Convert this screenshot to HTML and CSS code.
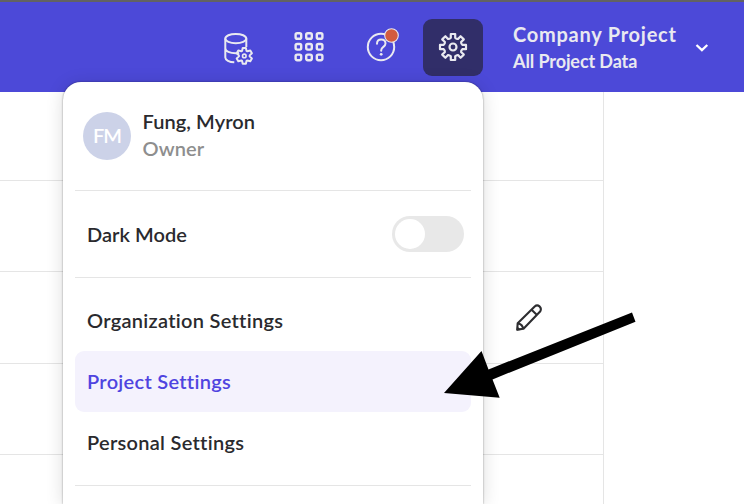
FILE: index.html
```html
<!DOCTYPE html>
<html lang="en">
<head>
<meta charset="utf-8">
<title>Project Settings</title>
<link rel="stylesheet" href="styles.css">
</head>
<body>
<header class="topbar">
  <nav class="tools">
    <svg class="tool" viewBox="0 0 60 57" fill="none" stroke="currentColor" stroke-width="2">
      <ellipse cx="28.8" cy="19.6" rx="10.5" ry="4.7"/>
      <path d="M18.3 19.6V38.5c0 2.5 4 4.6 9 4.8M39.3 19.6v8.4M18.3 29.3c0 3 4.5 5 10.5 5 1.2 0 2.4-.1 3.4-.3"/>
      <g transform="translate(37.3 36.9)" stroke-linejoin="round">
        <path d="M-1.6-7.9H1.6L2.2-5 3-4.6 6-5.4 7.6-2.6 5.4-.5V.5L7.6 2.6 6 5.4 3 4.6 2.2 5 1.6 7.9H-1.6L-2.2 5-3 4.6-6 5.4-7.6 2.6-5.4.5V-.5L-7.6-2.6-6-5.4-3-4.6-2.2-5Z"/>
        <circle r="1.8" stroke-width="1.6"/>
      </g>
    </svg>
    <svg class="tool" viewBox="0 0 60 57" fill="none" stroke="currentColor" stroke-width="2.4">
      <rect x="16.6" y="14.2" width="5.6" height="5.6" rx="1.6"/>
      <rect x="27.2" y="14.2" width="5.6" height="5.6" rx="1.6"/>
      <rect x="37.8" y="14.2" width="5.6" height="5.6" rx="1.6"/>
      <rect x="16.6" y="25" width="5.6" height="5.6" rx="1.6"/>
      <rect x="27.2" y="25" width="5.6" height="5.6" rx="1.6"/>
      <rect x="37.8" y="25" width="5.6" height="5.6" rx="1.6"/>
      <rect x="16.6" y="35.6" width="5.6" height="5.6" rx="1.6"/>
      <rect x="27.2" y="35.6" width="5.6" height="5.6" rx="1.6"/>
      <rect x="37.8" y="35.6" width="5.6" height="5.6" rx="1.6"/>
    </svg>
    <svg class="tool" viewBox="0 0 60 57" fill="none" stroke="currentColor" stroke-width="2">
      <circle cx="30" cy="28" r="13.2"/>
      <path d="M26 24.7c0-2.6 1.7-4.2 4.2-4.2s4.3 1.6 4.3 4c0 3.4-4.3 3.3-4.3 6.8v.5" stroke-linecap="round"/>
      <circle cx="30.2" cy="35.3" r="1.4" fill="currentColor" stroke="none"/>
      <circle cx="40.5" cy="16.5" r="6.8" fill="#d25b3e" stroke-width="1.1"/>
    </svg>
    <svg class="tool active" viewBox="0 0 60 57" fill="none" stroke="currentColor" stroke-width="2.2">
      <g transform="translate(30 28)" stroke-linejoin="round">
        <path d="M-2.2-9.3V-13H2.2V-9.3Q3.6-7.9 5-8.1L7.6-10.8 10.8-7.6 8.1-5Q7.9-3.6 9.3-2.2H13V2.2H9.3Q7.9 3.6 8.1 5L10.8 7.6 7.6 10.8 5 8.1Q3.6 7.9 2.2 9.3V13H-2.2V9.3Q-3.6 7.9-5 8.1L-7.6 10.8-10.8 7.6-8.1 5Q-7.9 3.6-9.3 2.2H-13V-2.2H-9.3Q-7.9-3.6-8.1-5L-10.8-7.6-7.6-10.8-5-8.1Q-3.6-7.9-2.2-9.3Z"/>
        <circle r="3.5"/>
      </g>
    </svg>
  </nav>
  <div class="project">
    <div class="project-name">Company Project</div>
    <div class="project-data">All Project Data</div>
  </div>
  <svg class="chevron" viewBox="0 0 14 10" fill="none" stroke="#fff" stroke-width="2.3"><path d="M1.5 2 6.9 7.1 12.3 2"/></svg>
</header>
<main class="table">
  <div class="row r1"></div>
  <div class="row r2"></div>
  <div class="row r3">
    <svg class="pencil" viewBox="0 0 30 30" fill="none" stroke="#2d2d30" stroke-width="2.1" stroke-linejoin="round">
      <path d="M3.2 26.6 3.7 20.2 20.7 3.5Q23.1 1.3 25.5 3.4T26.1 8.6L9.5 25.8ZM17.6 6.8 23 11.9M4.3 20.4Q8.5 21.4 9.1 25.6"/>
      <path d="m2.7 27.4.3-4.4 4 4Z" fill="#2d2d30" stroke="none"/>
    </svg>
  </div>
  <div class="row r4"></div>
  <div class="row r5"></div>
</main>
<aside class="menu">
  <section class="user">
    <div class="avatar">FM</div>
    <div class="identity">
      <div class="name">Fung, Myron</div>
      <div class="role">Owner</div>
    </div>
  </section>
  <section class="mode">
    <span class="dark-label">Dark Mode</span>
    <span class="switch"><span class="knob"></span></span>
  </section>
  <section class="links">
    <a class="item">Organization Settings</a>
    <a class="item selected">Project Settings</a>
    <a class="item">Personal Settings</a>
  </section>
</aside>
<svg class="arrow" viewBox="0 0 192 88"><path d="M0 81 37.5 38.9 44.5 57.4 188 .5 191.5 9.8 48.5 67.4 55.7 85.8Z"/></svg>
</body>
</html>
```
FILE: styles.css
```css
* { box-sizing: border-box; }
body {
  margin: 0;
  width: 744px;
  height: 504px;
  overflow: hidden;
  position: relative;
  background: #fff;
  color: #2a2a2e;
  font-family: Lato, "Liberation Sans", sans-serif;
  font-size: 20px;
  font-weight: 600;
  line-height: 27px;
  white-space: nowrap;
  font-variant-ligatures: none;
}
.topbar {
  height: 92px;
  border-top: 2px solid #626262;
  background: #4c49d8;
  color: #e9e9f0;
  display: flex;
  align-items: flex-start;
  padding: 17px 0 0 207px;
}
.tools { display: flex; gap: 12px; }
.tool { display: block; width: 60px; height: 57px; border-radius: 9px; }
.active { background: #312e69; }
.project { width: 165px; margin-left: 30px; padding-top: 2px; font-weight: 700; }
.project-name { letter-spacing: 0.75px; }
.project-data { font-size: 18px; letter-spacing: -0.1px; }
.chevron { width: 14px; height: 10px; margin: 24px 0 0 17px; }
.table { width: 604px; height: 412px; border-right: 1px solid #e5e5e5; }
.row { height: 91px; border-bottom: 1px solid #e5e5e5; }
.r1 { height: 89px; }
.r3 { height: 92px; display: flex; justify-content: flex-end; padding: 31px 59px 0 0; }
.r5 { border: 0; height: 49px; }
.pencil { width: 30px; height: 30px; }
.menu {
  position: absolute;
  left: 63px;
  top: 82px;
  width: 420px;
  height: 422px;
  padding: 0 12px;
  border-radius: 18px 18px 0 0;
  background: #fff;
  box-shadow: 0 0 2px rgba(0,0,0,.45), 0 2px 18px rgba(0,0,0,.14);
}
.user {
  height: 109px;
  display: flex;
  padding: 26px 0 0 8px;
  gap: 11.5px;
  border-bottom: 1px solid #e5e5e5;
}
.avatar {
  width: 48px;
  height: 48px;
  margin-top: 4px;
  border-radius: 50%;
  background: #ccd2e8;
  color: #fff;
  text-align: center;
  line-height: 47px;
  letter-spacing: -0.9px;
}
.name { letter-spacing: 0.08px; }
.role { color: #8e8e8e; letter-spacing: 0.1px; }
.mode {
  height: 87px;
  display: flex;
  align-items: center;
  justify-content: space-between;
  padding: 0 7px 0 12px;
  border-bottom: 1px solid #e5e5e5;
}
.dark-label { letter-spacing: 0.05px; }
.switch { width: 72px; height: 36px; padding: 3px; border-radius: 18px; background: #e8e8e8; }
.knob { display: block; width: 30px; height: 30px; border-radius: 50%; background: #fff; }
.links { height: 208px; padding-top: 12px; border-bottom: 1px solid #e5e5e5; }
.item { display: block; height: 61px; padding: 17px 12px; border-radius: 9px; letter-spacing: 0.29px; }
.selected { color: #4f44e0; background: #f4f2fd; }
.arrow { position: absolute; left: 444px; top: 312px; width: 192px; height: 88px; }
```
